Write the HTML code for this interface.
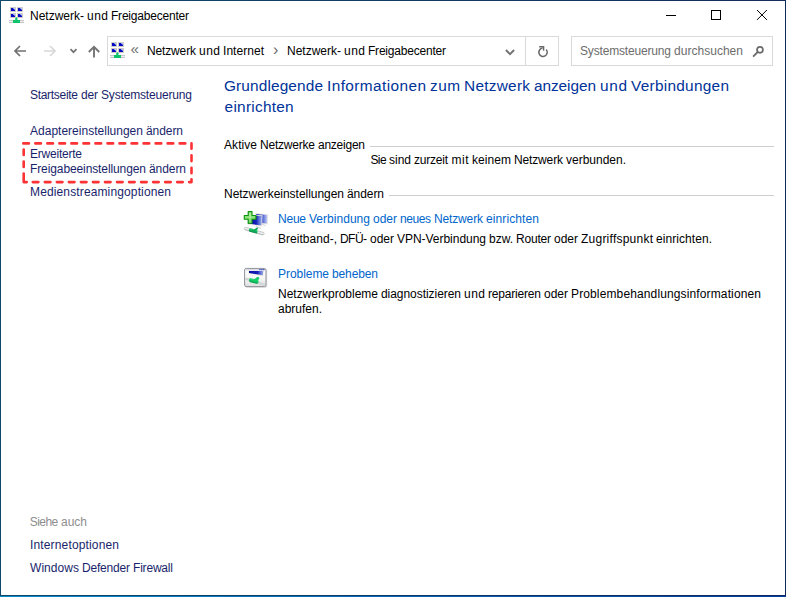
<!DOCTYPE html>
<html lang="de"><head><meta charset="utf-8"><title>Netzwerk- und Freigabecenter</title>
<style>
html,body{margin:0;padding:0;background:#fff;}
body{width:786px;height:597px;position:relative;overflow:hidden;font-family:"Liberation Sans",sans-serif;font-size:12px;color:#000;}
.t{position:absolute;white-space:nowrap;line-height:16px;}
.ln0{white-space:nowrap;line-height:16px;width:786px;height:0;}
.w{position:absolute;top:0;white-space:nowrap;transform-origin:0 0;}
.bd{position:absolute;background:#114a6e;}
.nav{color:#191f6b;}
.lnk{color:#0066cc;}
.h{color:#003399;font-size:15.4px;line-height:20px;}
.gr{color:#6d6d6d;}
.ln{position:absolute;height:1px;background:#cdcdcd;}
.box{position:absolute;border:1px solid #d9d9d9;box-sizing:border-box;background:#fff;}
svg{position:absolute;overflow:visible;}
</style></head><body>
<!-- window frame -->
<div class="bd" style="left:0;top:0;width:786px;height:1px;background:linear-gradient(90deg,#0f4a6c,#142d5c);"></div>
<div class="bd" style="left:0;top:0;width:1px;height:597px;background:#0f4a6c;"></div>
<div class="bd" style="left:785px;top:0;width:1px;height:597px;background:#10295c;"></div>
<div class="bd" style="left:0;top:595px;width:786px;height:1px;background:linear-gradient(90deg,#0f4a66,#0b2b62);"></div>
<div class="bd" style="left:0;top:596px;width:786px;height:1px;background:linear-gradient(90deg,#0a8ccc,#0a3d9b);"></div>

<!-- title icon -->
<svg id="ic1" style="left:9px;top:7px" width="16" height="16" viewBox="0 0 16 16">
<g id="neticon">
<rect x="0" y="13" width="15" height="3" fill="#c4c8cb"/><rect x="0" y="14" width="15" height="1" fill="#eceeef"/>
<rect x="4" y="13" width="7" height="3" fill="#10c46c"/><rect x="6.2" y="10.2" width="2.3" height="3" fill="#10c46c"/>
<rect x="1" y="0" width="6" height="5" fill="#cfccc7"/><rect x="2" y="1" width="4" height="3" fill="#0808c4"/><polygon points="3.6,1 6,1 6,3" fill="#b4ccf8"/>
<rect x="8" y="0" width="6" height="5" fill="#cfccc7"/><rect x="9" y="1" width="4" height="3" fill="#0808c4"/><polygon points="10.6,1 13,1 13,3" fill="#b4ccf8"/>
<rect x="1" y="6" width="6" height="5" fill="#cfccc7"/><rect x="2" y="7" width="4" height="3" fill="#0808c4"/><polygon points="3.6,7 6,7 6,9" fill="#b4ccf8"/>
<rect x="8" y="6" width="6" height="5" fill="#cfccc7"/><rect x="9" y="7" width="4" height="3" fill="#0808c4"/><polygon points="10.6,7 13,7 13,9" fill="#b4ccf8"/>
</g></svg>
<div class="ln0" id="title" style="position:absolute;left:0;top:8px;"><span class="w" id="title_0" style="left:30px;letter-spacing:-0.002px;">Netzwerk-</span> <span class="w" id="title_1" style="left:87px;letter-spacing:0.484px;">und</span> <span class="w" id="title_2" style="left:111px;letter-spacing:-0.209px;">Freigabecenter</span></div>

<!-- window controls -->
<svg style="left:660px;top:5px" width="120" height="22" viewBox="660 5 120 22" fill="none" stroke="#000" stroke-width="1">
<path d="M666 15.5H676"/><rect x="711.5" y="10.5" width="9" height="9"/><path d="M757 10L766.9 19.9M766.9 10L757 19.9"/></svg>

<!-- nav arrows -->
<svg style="left:10px;top:40px" width="95" height="24" viewBox="10 40 95 24" fill="none" stroke-linecap="butt">
<path d="M26 51H15M20 46L15 51L20 56" stroke="#707070" stroke-width="1.7"/>
<path d="M44 51H55M50 46L55 51L50 56" stroke="#d8d8d8" stroke-width="1.7"/>
<path d="M70.5 49.2L73.5 52.2L76.5 49.2" stroke="#747474" stroke-width="1.7"/>
<path d="M94 57.5V47M88.8 52L94 46.8L99.2 52" stroke="#747474" stroke-width="1.9"/>
</svg>

<!-- address box -->
<div class="box" style="left:107px;top:36px;width:452px;height:30px;"></div>
<div class="ln" style="left:525px;top:37px;width:1px;height:28px;background:#d9d9d9;"></div>
<svg style="left:110px;top:42px" width="16" height="16" viewBox="0 0 16 16"><use href="#neticon"/></svg>
<div class="t gr" id="bc0" style="left:130.4px;top:41px;font-size:15px;">«</div>
<div class="ln0" id="bc1" style="position:absolute;left:0;top:43px;"><span class="w" id="bc1_0" style="left:147px;letter-spacing:-0.145px;">Netzwerk</span> <span class="w" id="bc1_1" style="left:199px;letter-spacing:0.484px;">und</span> <span class="w" id="bc1_2" style="left:223px;letter-spacing:0.042px;">Internet</span></div>
<div class="t gr" id="bc2" style="left:273px;top:42px;font-size:16px;">›</div>
<div class="ln0" id="bc3" style="position:absolute;left:0;top:43px;"><span class="w" id="bc3_0" style="left:287px;letter-spacing:-0.002px;">Netzwerk-</span> <span class="w" id="bc3_1" style="left:344px;letter-spacing:0.484px;">und</span> <span class="w" id="bc3_2" style="left:368px;letter-spacing:-0.209px;">Freigabecenter</span></div>
<svg style="left:500px;top:44px" width="60" height="16" viewBox="500 44 60 16" fill="none" stroke="#6a6a6a" stroke-width="1.6">
<path d="M505.9 50L510 54.1L514.1 50" stroke-width="2" stroke="#747474"/>
<path d="M542.6 48.1A4.2 4.2 0 1 0 546.2 49.5" stroke-width="1.5"/><path d="M539.2 46.7H543.6V50.8" stroke-width="1.4"/>
</svg>

<!-- search box -->
<div class="box" style="left:571px;top:36px;width:202px;height:30px;"></div>
<div class="ln0 gr" id="search" style="position:absolute;left:0;top:43px;"><span class="w" id="search_0" style="left:580px;letter-spacing:-0.171px;">Systemsteuerung</span> <span class="w" id="search_1" style="left:674px;letter-spacing:0.028px;">durchsuchen</span></div>
<svg style="left:750px;top:44px" width="16" height="16" viewBox="750 44 16 16" fill="none" stroke="#6a6a6a" stroke-width="1.5">
<circle cx="760" cy="49.85" r="2.95" stroke-width="1.7"/><path d="M757.9 51.9L753.1 56.7" stroke-width="1.9"/></svg>

<!-- sidebar -->
<div class="ln0 nav" id="s1" style="position:absolute;left:0;top:87px;"><span class="w" id="s1_0" style="left:30px;letter-spacing:-0.3px;">Startseite</span> <span class="w" id="s1_1" style="left:81px;letter-spacing:-0.172px;">der</span> <span class="w" id="s1_2" style="left:101px;letter-spacing:-0.171px;">Systemsteuerung</span></div>
<div class="ln0 nav" id="s2" style="position:absolute;left:0;top:123px;"><span class="w" id="s2_0" style="left:30px;letter-spacing:0.012px;">Adaptereinstellungen</span> <span class="w" id="s2_1" style="left:146px;letter-spacing:-0.075px;">ändern</span></div>
<div class="ln0 nav" id="s3" style="position:absolute;left:0;top:146px;"><span class="w" id="s3_0" style="left:30px;letter-spacing:-0.226px;">Erweiterte</span></div>
<div class="ln0 nav" id="s4" style="position:absolute;left:0;top:161px;"><span class="w" id="s4_0" style="left:30px;letter-spacing:-0.105px;">Freigabeeinstellungen</span> <span class="w" id="s4_1" style="left:149px;letter-spacing:-0.075px;">ändern</span></div>
<div class="ln0 nav" id="s5" style="position:absolute;left:0;top:184px;"><span class="w" id="s5_0" style="left:30px;letter-spacing:0.132px;">Medienstreamingoptionen</span></div>
<svg style="left:0;top:0" width="220" height="200" viewBox="0 0 220 200" fill="none" stroke="#fc3235" stroke-width="2.6" stroke-linecap="round"><path d="M23.30 143.40H28.90M35.33 143.40H40.93M47.36 143.40H52.96M59.39 143.40H64.99M71.42 143.40H77.02M83.45 143.40H89.05M95.48 143.40H101.08M107.51 143.40H113.11M119.54 143.40H125.14M131.57 143.40H137.17M143.60 143.40H149.20M155.63 143.40H161.23M167.66 143.40H173.26M179.69 143.40H185.29M191.50 143.40V148.70M191.50 155.30V161.10M191.50 167.70V173.30M191.50 179.30V182.10M32.80 182.10H38.40M44.83 182.10H50.43M56.86 182.10H62.46M68.89 182.10H74.49M80.92 182.10H86.52M92.95 182.10H98.55M104.98 182.10H110.58M117.01 182.10H122.61M129.04 182.10H134.64M141.07 182.10H146.67M153.10 182.10H158.70M165.13 182.10H170.73M177.16 182.10H182.76M189.19 182.10H191.50M23.70 182.10H26.70M23.70 149.60V155.00M23.70 161.60V167.00M23.70 173.60V182.10"/></svg>
<div class="ln0" id="s6" style="position:absolute;left:0;top:514px;color:#8e8e8e;"><span class="w" id="s6_0" style="left:29.8484px;letter-spacing:-0.6px;">Siehe</span> <span class="w" id="s6_1" style="left:61px;letter-spacing:-0.01px;">auch</span></div>
<div class="ln0 nav" id="s7" style="position:absolute;left:0;top:537px;"><span class="w" id="s7_0" style="left:30px;letter-spacing:0.15px;">Internetoptionen</span></div>
<div class="ln0 nav" id="s8" style="position:absolute;left:0;top:560px;"><span class="w" id="s8_0" style="left:30px;letter-spacing:0.052px;">Windows</span> <span class="w" id="s8_1" style="left:82px;letter-spacing:-0.196px;">Defender</span> <span class="w" id="s8_2" style="left:133px;letter-spacing:-0.192px;">Firewall</span></div>


<!-- icon: new connection -->
<svg style="left:238px;top:206px" width="36" height="36" viewBox="238 206 36 36">
<defs>
<linearGradient id="gb1" x1="0" y1="0" x2="1" y2="0"><stop offset="0" stop-color="#0508a8"/><stop offset=".6" stop-color="#1422b8"/><stop offset=".85" stop-color="#6f82dc"/><stop offset="1" stop-color="#93a4e8"/></linearGradient>
<linearGradient id="gb2" x1="0" y1="0" x2="1" y2="0"><stop offset="0" stop-color="#1c2cc4"/><stop offset=".6" stop-color="#5668d8"/><stop offset="1" stop-color="#c4cff4"/></linearGradient>
<linearGradient id="gp" x1="0" y1="0" x2="0" y2="1"><stop offset="0" stop-color="#d9dcdc"/><stop offset=".5" stop-color="#f4f5f5"/><stop offset="1" stop-color="#a9aeae"/></linearGradient>
<linearGradient id="gg" x1="0" y1="0" x2="0" y2="1"><stop offset="0" stop-color="#35d07c"/><stop offset=".5" stop-color="#0fb45c"/><stop offset="1" stop-color="#078a42"/></linearGradient>
<filter id="bl" x="-20%" y="-20%" width="140%" height="140%"><feGaussianBlur stdDeviation="0.35"/></filter>
</defs>
<g filter="url(#bl)">
<polygon points="255.4,213.1 268,214.3 267.8,224.4 255.4,223.4" fill="#e9e6dc"/>
<polygon points="256.2,213.9 267.3,215 267.1,223.5 256.2,222.6" fill="url(#gb2)"/>
<path d="M262 224l3.5 1.8" stroke="#d0d0d0" stroke-width="1"/>
<polygon points="247.4,214.4 262.4,215.3 262.1,226.5 247.4,224.4" fill="#ece9df"/>
<polygon points="248.1,215.2 261.7,216 261.4,225.5 248.1,223.6" fill="url(#gb1)"/>
<path d="M256 226.2l5 2.4" stroke="#d4d4d4" stroke-width="1.2"/>
<g transform="rotate(16 254 231)">
<rect x="243.8" y="229.7" width="20.8" height="2.8" rx="1.4" fill="url(#gp)" stroke="#aeb3b3" stroke-width=".5"/>
<rect x="248.8" y="229.3" width="8.8" height="3.5" rx="1.4" fill="url(#gg)"/>
</g>
<path d="M254.4 230.4l2.8-2" stroke="#10a857" stroke-width="1.8" stroke-linecap="round"/>
<path d="M248.2 211.6h3.8v3.9h3.9v3.8h-3.9v3.9h-3.8v-3.9h-3.9v-3.8h3.9z" fill="#8be27a" stroke="#0b930b" stroke-width="1.1" stroke-linejoin="round"/>
<path d="M249.4 212.8h1.4v5.2h-1.4z" fill="#b9f0a8"/>
</g>
</svg>
<!-- icon: troubleshoot -->
<svg style="left:238px;top:260px" width="36" height="36" viewBox="238 260 36 36">
<defs>
<linearGradient id="gg2" x1="0" y1="0" x2="0" y2="1"><stop offset="0" stop-color="#3ce088"/><stop offset=".5" stop-color="#12c862"/><stop offset="1" stop-color="#0a9a4a"/></linearGradient><linearGradient id="gw" x1="0" y1="0" x2="0" y2="1"><stop offset="0" stop-color="#ffffff"/><stop offset=".55" stop-color="#f6f6f6"/><stop offset="1" stop-color="#dedede"/></linearGradient>
</defs>
<g filter="url(#bl)">
<rect x="245.3" y="269" width="22" height="19" rx="1.8" fill="#d9d9d9" opacity=".7"/>
<rect x="244.6" y="268.4" width="21.4" height="18.2" rx="1.6" fill="url(#gw)" stroke="#90939b" stroke-width="1"/>
<rect x="245.4" y="269.1" width="19.8" height="1.4" fill="#d5d8de"/>
<rect x="259.4" y="269" width="1.2" height="1.2" fill="#2438c0"/><rect x="261.3" y="269" width="1.2" height="1.2" fill="#2438c0"/><rect x="263.2" y="269" width="1.2" height="1.2" fill="#2438c0"/>
<polygon points="248.6,271 263.6,271 263.2,275.9 248.6,273.7" fill="#ebe6d4"/>
<polygon points="249,271 263.2,271 262.8,275.2 249,273.1" fill="url(#gb1)"/>
<path d="M245.4 278.6l5 1.4" stroke="#cfd3d3" stroke-width="2.4"/>
<path d="M256 282l9 3" stroke="#d3d7d7" stroke-width="2.6"/>
<g transform="rotate(14 254 281)"><rect x="249" y="278.9" width="9.6" height="4.2" rx="1.6" fill="url(#gg2)"/></g>
<path d="M255.2 280.4l2.6-2" stroke="#16cc68" stroke-width="3" stroke-linecap="round"/>
</g>
</svg>
<!-- main -->
<div class="ln0 h" id="h1" style="position:absolute;left:0;top:76px;"><span class="w" id="h1_0" style="left:224px;letter-spacing:0.131px;">Grundlegende</span> <span class="w" id="h1_1" style="left:327px;letter-spacing:0.406px;">Informationen</span> <span class="w" id="h1_2" style="left:430px;letter-spacing:0.461px;">zum</span> <span class="w" id="h1_3" style="left:464px;letter-spacing:0.266px;">Netzwerk</span> <span class="w" id="h1_4" style="left:534px;letter-spacing:-0.069px;">anzeigen</span> <span class="w" id="h1_5" style="left:600px;letter-spacing:0.656px;">und</span> <span class="w" id="h1_6" style="left:631px;letter-spacing:0.273px;">Verbindungen</span></div>
<div class="ln0 h" id="h2" style="position:absolute;left:0;top:97px;"><span class="w" id="h2_0" style="left:224.6px;letter-spacing:0.252px;">einrichten</span></div>
<div class="ln0" id="m1" style="position:absolute;left:0;top:137px;"><span class="w" id="m1_0" style="left:224px;letter-spacing:0.062px;">Aktive</span> <span class="w" id="m1_1" style="left:260px;letter-spacing:-0.211px;">Netzwerke</span> <span class="w" id="m1_2" style="left:318px;letter-spacing:-0.246px;">anzeigen</span></div>
<div class="ln" style="left:370px;top:146px;width:404px;"></div>
<div class="ln0" id="m2" style="position:absolute;left:0;top:152px;"><span class="w" id="m2_0" style="left:370.428px;letter-spacing:-0.6px;">Sie</span> <span class="w" id="m2_1" style="left:389px;letter-spacing:-0.005px;">sind</span> <span class="w" id="m2_2" style="left:414px;letter-spacing:-0.224px;">zurzeit</span> <span class="w" id="m2_3" style="left:451.5px;letter-spacing:0.5px;">mit</span> <span class="w" id="m2_4" style="left:472px;letter-spacing:0.062px;">keinem</span> <span class="w" id="m2_5" style="left:514px;letter-spacing:-0.145px;">Netzwerk</span> <span class="w" id="m2_6" style="left:566px;letter-spacing:-0.005px;">verbunden.</span></div>
<div class="ln0" id="m3" style="position:absolute;left:0;top:186px;"><span class="w" id="m3_0" style="left:224px;letter-spacing:-0.037px;">Netzwerkeinstellungen</span> <span class="w" id="m3_1" style="left:347px;letter-spacing:-0.075px;">ändern</span></div>
<div class="ln" style="left:389px;top:195px;width:385px;"></div>
<div class="ln0 lnk" id="m4" style="position:absolute;left:0;top:211px;"><span class="w" id="m4_0" style="left:278px;letter-spacing:-0.229px;">Neue</span> <span class="w" id="m4_1" style="left:309px;letter-spacing:0.03px;">Verbindung</span> <span class="w" id="m4_2" style="left:373px;letter-spacing:-0.01px;">oder</span> <span class="w" id="m4_3" style="left:400px;letter-spacing:-0.426px;">neues</span> <span class="w" id="m4_4" style="left:434px;letter-spacing:-0.145px;">Netzwerk</span> <span class="w" id="m4_5" style="left:486px;letter-spacing:0.108px;">einrichten</span></div>
<div class="ln0" id="m5" style="position:absolute;left:0;top:231px;"><span class="w" id="m5_0" style="left:278px;letter-spacing:0.03px;">Breitband-,</span> <span class="w" id="m5_1" style="left:340px;letter-spacing:-0.557px;">DFÜ-</span> <span class="w" id="m5_2" style="left:370px;letter-spacing:-0.01px;">oder</span> <span class="w" id="m5_3" style="left:397px;letter-spacing:-0.03px;">VPN-Verbindung</span> <span class="w" id="m5_4" style="left:489px;letter-spacing:-0.005px;">bzw.</span> <span class="w" id="m5_5" style="left:516px;letter-spacing:-0.206px;">Router</span> <span class="w" id="m5_6" style="left:554px;letter-spacing:-0.01px;">oder</span> <span class="w" id="m5_7" style="left:581px;letter-spacing:0.237px;">Zugriffspunkt</span> <span class="w" id="m5_8" style="left:656px;letter-spacing:0.062px;">einrichten.</span></div>
<div class="ln0 lnk" id="m6" style="position:absolute;left:0;top:266px;"><span class="w" id="m6_0" style="left:278px;letter-spacing:-0.051px;">Probleme</span> <span class="w" id="m6_1" style="left:332px;letter-spacing:-0.12px;">beheben</span></div>
<div class="ln0" id="m7" style="position:absolute;left:0;top:286px;"><span class="w" id="m7_0" style="left:278px;letter-spacing:-0.003px;">Netzwerkprobleme</span> <span class="w" id="m7_1" style="left:381px;letter-spacing:-0.051px;">diagnostizieren</span> <span class="w" id="m7_2" style="left:464px;letter-spacing:0.484px;">und</span> <span class="w" id="m7_3" style="left:488px;letter-spacing:-0.189px;">reparieren</span> <span class="w" id="m7_4" style="left:544px;letter-spacing:-0.01px;">oder</span> <span class="w" id="m7_5" style="left:571px;letter-spacing:0.129px;">Problembehandlungsinformationen</span></div>
<div class="ln0" id="m8" style="position:absolute;left:0;top:301px;"><span class="w" id="m8_0" style="left:278px;letter-spacing:-0.007px;">abrufen.</span></div>
</body></html>
